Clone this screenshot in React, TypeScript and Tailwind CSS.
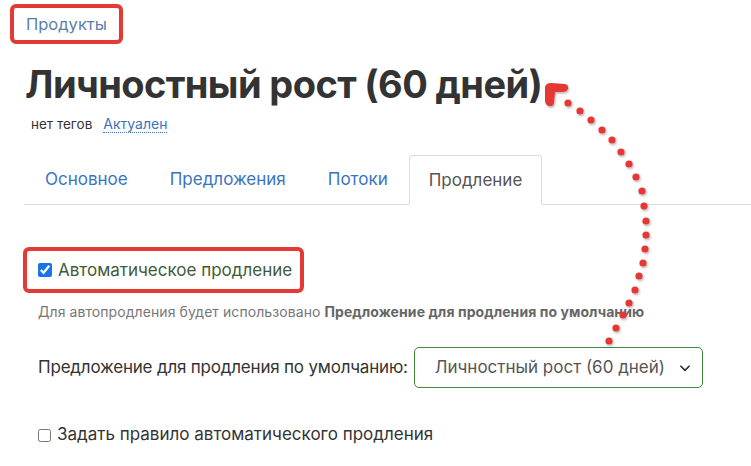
const dots: [number, number][] = [
  [568, 103], [580, 111], [591, 120], [602, 130], [612, 140], [621, 152], [629, 164], [636, 177],
  [642, 191], [644, 206], [646, 221], [646, 235], [645, 249], [643, 263], [639, 276], [635, 290],
  [629, 303], [623, 315], [616, 328], [609, 341],
];

function Annotation() {
  return (
    <svg className="pointer-events-none absolute left-0 top-0" width="751" height="466" aria-hidden="true">
      <defs>
        <filter id="sh" x="-50%" y="-50%" width="200%" height="200%">
          <feDropShadow dx="1" dy="1.5" stdDeviation="0.8" floodColor="#000" floodOpacity="0.3" />
        </filter>
      </defs>
      <g fill="#e53935" filter="url(#sh)">
        {dots.map(([x, y], i) => (
          <circle key={i} cx={x} cy={y} r="3.6" />
        ))}
        <path d="M545 87 Q546 83 551 83 L565 84 Q569 85 568 89 Q567 92 562 92 L555 92 L554 103 Q553 107 549 106 Q545 105 545 100 Z" />
      </g>
    </svg>
  );
}

export default function App() {
  return (
    <div
      className="relative h-[466px] w-[751px] overflow-hidden bg-white text-[#333]"
      style={{ fontFamily: "Inter, 'Noto Sans', sans-serif" }}
    >
      <div className="pl-[10px] pt-[4px]">
        <div className="inline-flex h-[40px] items-center rounded-[6px] border-[4px] border-[#e53935] px-[12px] text-[16.5px] text-[#5b7fa8]">
          Продукты
        </div>
      </div>

      <h1 className="ml-[25px] mt-[18px] text-[38px] font-bold leading-[44px] tracking-[-0.6px] text-[#333]">
        Личностный рост (60 дней)
      </h1>
      <div className="ml-[31px] mt-[8px] flex items-center gap-[11px]">
        <span className="text-[13.5px]">нет тегов</span>
        <span className="border-b border-dotted border-[#3a74c0] text-[14px] leading-[16px] text-[#3a74c0]">Актуален</span>
      </div>

      <div className="ml-[24px] mt-[21px] flex h-[50px] items-end border-b border-[#dcdcdc] text-[17px]">
        <div className="flex h-[49px] items-center px-[21px] text-[#3a74c0]">Основное</div>
        <div className="flex h-[49px] items-center px-[21px] text-[#3a74c0]">Предложения</div>
        <div className="flex h-[49px] items-center px-[21px] text-[#3a74c0]">Потоки</div>
        <div className="-mb-px flex h-[50px] items-center rounded-t-[4px] border border-b-white border-[#dcdcdc] bg-white px-[19px] text-[#555]">
          Продление
        </div>
      </div>

      <div className="ml-[23px] mt-[42px]">
        <label className="inline-flex h-[46px] items-center gap-[6px] rounded-[6px] border-[4px] border-[#e53935] pl-[11px] pr-[8px] text-[17px] text-[#3f5a3a]">
          <input type="checkbox" defaultChecked className="h-[14px] w-[14px] accent-[#1a73e8]" />
          Автоматическое продление
        </label>
      </div>
      <div className="ml-[38px] mt-[8px] text-[14px] tracking-[0.08px] text-[#777]">
        Для автопродления будет использовано <b className="font-bold text-[#666]">Предложение для продления по умолчанию</b>
      </div>

      <div className="ml-[38px] mt-[25px] flex items-center gap-[6px] text-[17px]">
        <span className="tracking-[-0.2px]">Предложение для продления по умолчанию:</span>
        <div className="flex h-[41px] w-[289px] items-center justify-between rounded-[5px] border border-[#3f8a3a] pl-[20px] pr-[10px] text-[#555]">
          <span>Личностный рост (60 дней)</span>
          <svg viewBox="0 0 24 24" width="14" height="14" fill="none" aria-hidden="true">
            <path d="M5 9l7 7 7-7" stroke="#333" strokeWidth="3" strokeLinecap="round" strokeLinejoin="round" />
          </svg>
        </div>
      </div>

      <label className="ml-[38px] mt-[34px] flex items-center gap-[6px] text-[17px]">
        <input type="checkbox" className="h-[13px] w-[13px]" />
        Задать правило автоматического продления
      </label>

      <Annotation />
    </div>
  );
}
